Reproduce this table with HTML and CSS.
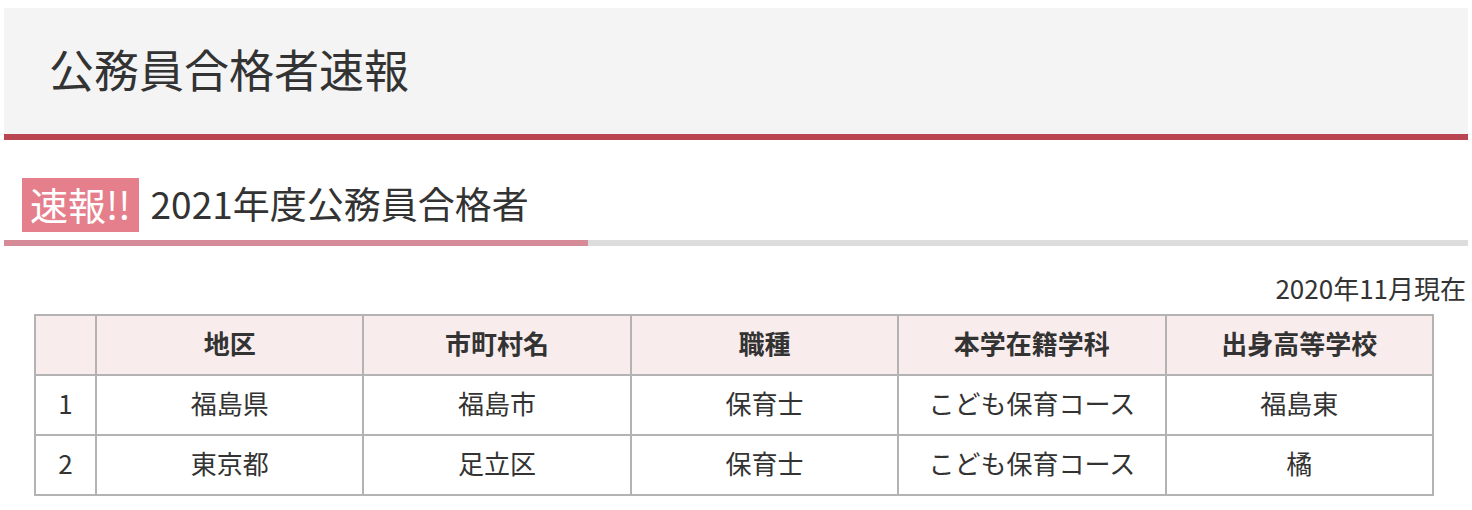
FILE: index.html
```html
<!DOCTYPE html>
<html lang="ja">
<head>
<meta charset="utf-8">
<title>公務員合格者速報</title>
<link rel="stylesheet" href="styles.css">
</head>
<body>
<div class="page">
  <header class="page-header">
    <h1 class="page-title">公務員合格者速報</h1>
  </header>
  <section class="news">
    <h2 class="news-heading">
      <span class="badge">速報!!</span>
      <span class="news-title">2021年度公務員合格者</span>
    </h2>
    <p class="asof">2020年11月現在</p>
    <table class="results">
      <thead>
        <tr>
          <th class="col-no"></th>
          <th>地区</th>
          <th>市町村名</th>
          <th>職種</th>
          <th>本学在籍学科</th>
          <th>出身高等学校</th>
        </tr>
      </thead>
      <tbody>
        <tr>
          <td>1</td>
          <td>福島県</td>
          <td>福島市</td>
          <td>保育士</td>
          <td>こども保育コース</td>
          <td>福島東</td>
        </tr>
        <tr>
          <td>2</td>
          <td>東京都</td>
          <td>足立区</td>
          <td>保育士</td>
          <td>こども保育コース</td>
          <td>橘</td>
        </tr>
      </tbody>
    </table>
  </section>
</div>
</body>
</html>
```

FILE: styles.css
```css
html, body {
  margin: 0;
  padding: 0;
  background: #ffffff;
}
body {
  padding: 8px 4px 0;
  font-family: "Noto Sans CJK JP", "Noto Sans", sans-serif;
  color: #333333;
}
.page-header {
  background: #f4f4f4;
  border-bottom: 6px solid #b94552;
  box-sizing: border-box;
  display: flex;
  align-items: center;
  padding: 0 0 4px 45px;
  height: 132px;
}
.page-title {
  margin: 0;
  font-size: 45px;
  font-weight: 400;
  line-height: 1.2;
  color: #333333;
}
.news {
  padding-top: 38px;
}
.news-heading {
  margin: 0;
  display: flex;
  align-items: center;
  gap: 12px;
  padding: 0 0 8px 18px;
  font-weight: 400;
  border-bottom: 6px solid transparent;
  border-image: linear-gradient(to right, #d68c98 0, #d68c98 584px, #dddddd 584px, #dddddd 100%) 1;
}
.badge {
  background: #e57f8c;
  color: #ffffff;
  font-size: 38px;
  line-height: 52px;
  height: 54px;
  padding: 0 8px 2px;
  box-sizing: border-box;
}
.news-title {
  font-size: 37px;
  line-height: 50px;
  padding-bottom: 4px;
  color: #333333;
}
.asof {
  margin: 24px 2px 8px 0;
  text-align: right;
  font-size: 26px;
  line-height: 36px;
}
.results {
  margin: 0 30px;
  width: calc(100% - 64px);
  border-collapse: collapse;
  font-size: 26px;
  table-layout: fixed;
}
.results th,
.results td {
  border: 2px solid #b3b3b3;
  height: 54px;
  padding: 0 0 4px;
  text-align: center;
  vertical-align: middle;
  line-height: 1.2;
}
.results th {
  background: #f9ecec;
  font-weight: 700;
}
.results .col-no {
  width: 59px;
}
```
